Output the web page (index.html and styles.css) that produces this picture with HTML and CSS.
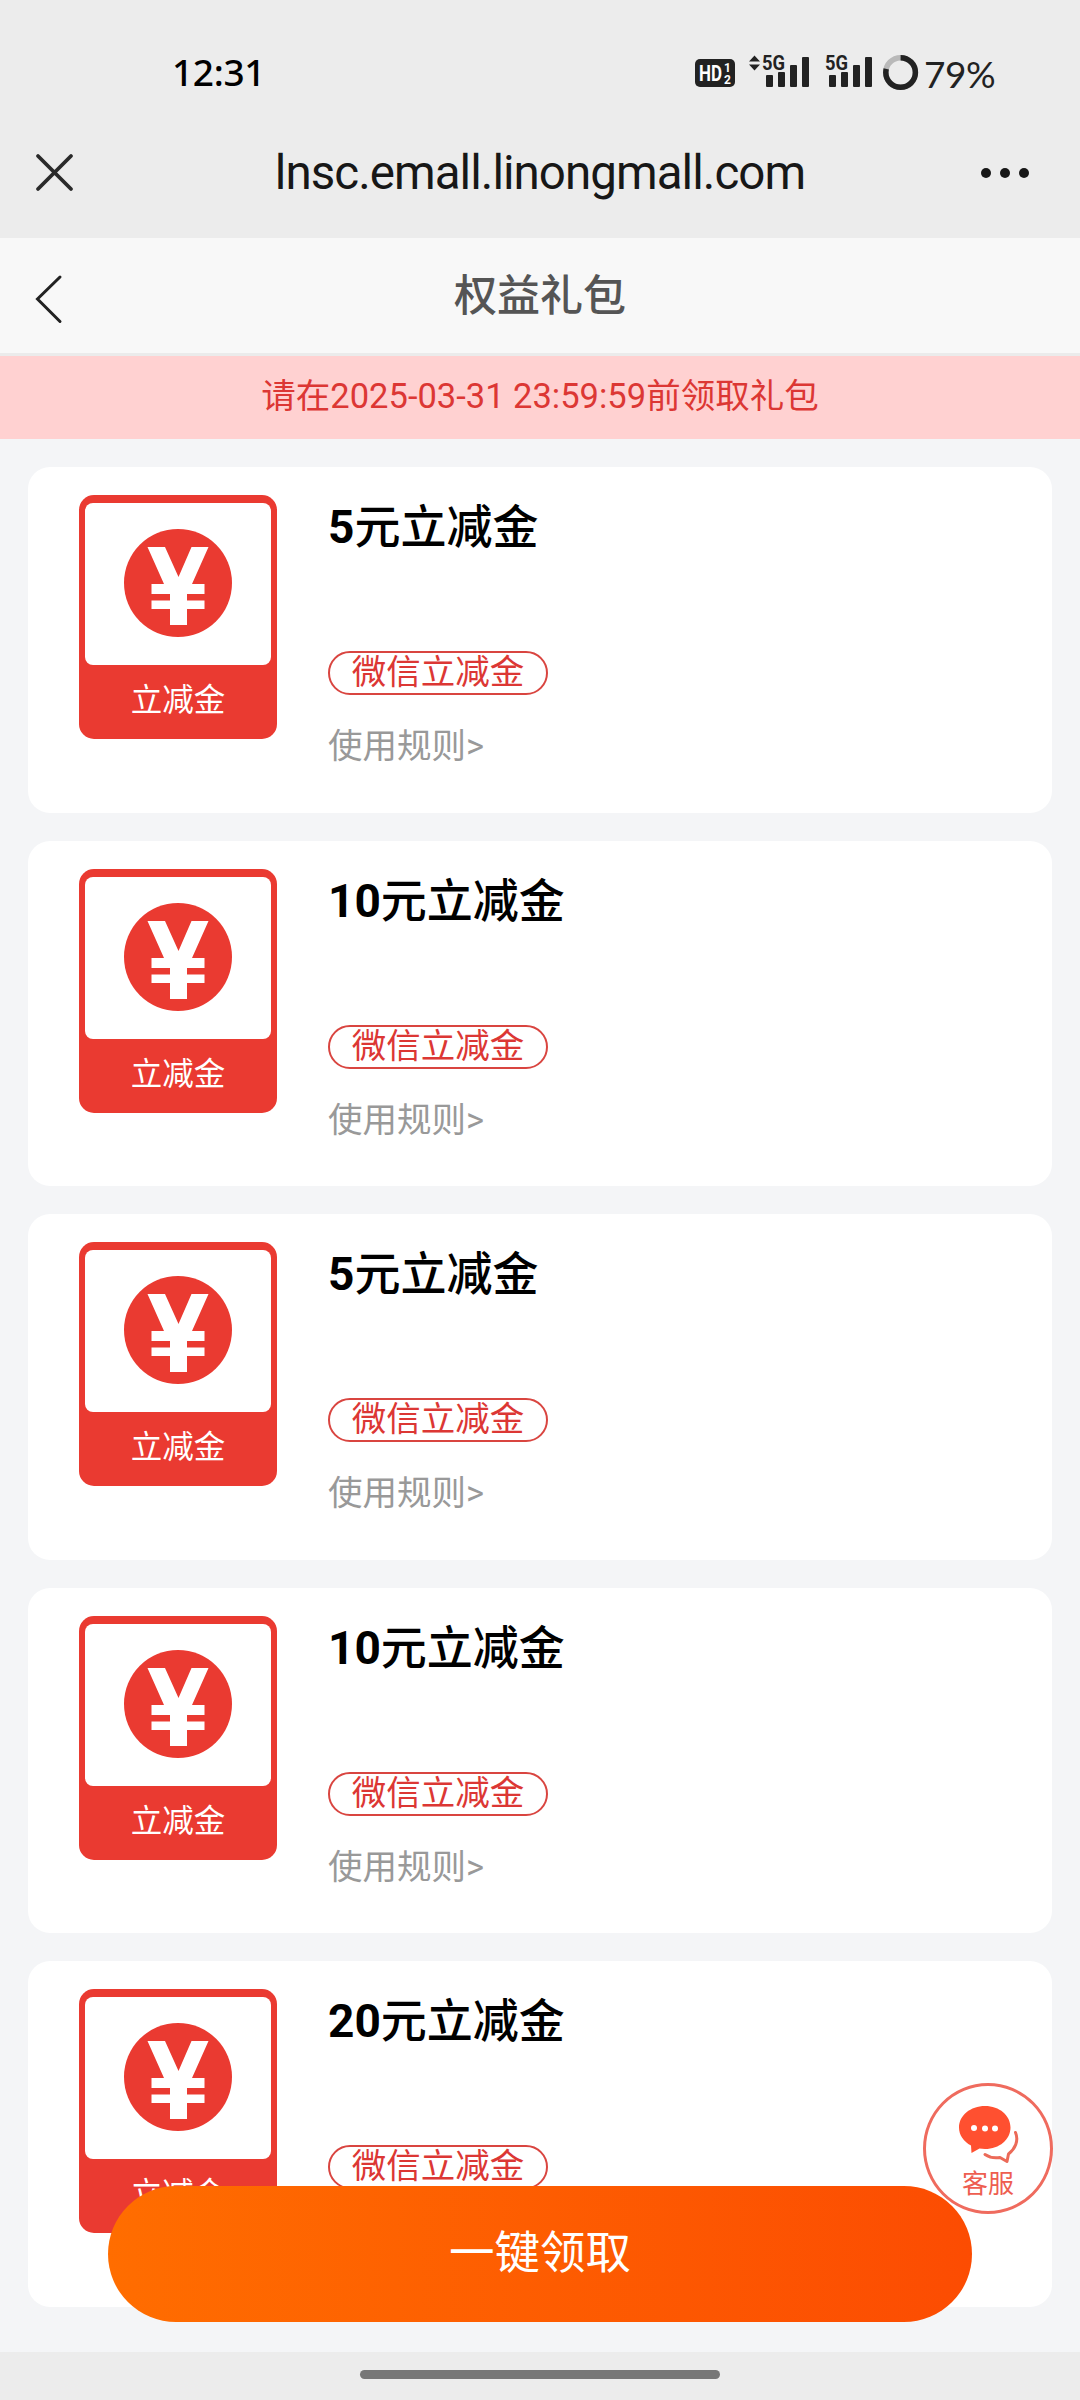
FILE: index.html
```html
<!DOCTYPE html>
<html lang="zh-CN">
<head>
<meta charset="utf-8">
<title>权益礼包</title>
<link rel="stylesheet" href="styles.css">
</head>
<body>
<div class="screen">
  <header class="status">
    <span class="clock">12:31</span>
    <div class="indicators">
      <svg class="signals" width="224" height="44" viewBox="0 0 224 44">
        <rect x="0" y="9" width="40" height="28" rx="5" fill="#222"/>
        <text class="hd" x="4" y="31" textLength="23" lengthAdjust="spacingAndGlyphs">HD</text>
        <text class="hd-num" x="29" y="22">1</text>
        <text class="hd-num" x="29" y="34">2</text>
        <g fill="#222">
          <path d="M54 11.500L59.500 5.500L65 11.500ZM54 14.500L59.500 20.500L65 14.500Z"/>
          <rect x="71" y="25" width="7" height="12" rx="1"/>
          <rect x="83" y="22" width="7" height="15" rx="1"/>
          <rect x="95" y="15" width="7" height="22" rx="1"/>
          <rect x="107" y="7" width="7" height="30" rx="1"/>
          <rect x="134" y="25" width="7" height="12" rx="1"/>
          <rect x="146" y="22" width="7" height="15" rx="1"/>
          <rect x="158" y="15" width="7" height="22" rx="1"/>
          <rect x="170" y="7" width="7" height="30" rx="1"/>
        </g>
        <text class="net" x="67" y="20" textLength="23" lengthAdjust="spacingAndGlyphs">5G</text>
        <text class="net" x="130" y="20" textLength="23" lengthAdjust="spacingAndGlyphs">5G</text>
        <circle cx="205.600" cy="22.500" r="14.800" fill="none" stroke="#b9b9b9" stroke-width="5.500"/>
        <circle cx="205.600" cy="22.500" r="14.800" fill="none" stroke="#222" stroke-width="5.500" pathLength="100" stroke-dasharray="79 21" transform="rotate(-90 205.600 22.500)"/>
      </svg>
      <span class="battery">79%</span>
    </div>
  </header>
  <div class="webbar">
    <svg width="41" height="41" viewBox="0 0 41 41"><path d="M4 4L37 37M37 4L4 37" stroke="#2a2a2a" stroke-width="3.800" stroke-linecap="round"/></svg>
    <span class="url">lnsc.emall.linongmall.com</span>
    <svg width="50" height="12" viewBox="0 0 50 12" fill="#171717"><circle cx="6" cy="6" r="5"/><circle cx="25" cy="6" r="5"/><circle cx="44" cy="6" r="5"/></svg>
  </div>
  <nav class="nav">
    <svg width="30" height="50" viewBox="0 0 30 50"><path d="M26 3L3.500 25L26 47.500" fill="none" stroke="#222" stroke-width="3" stroke-linecap="round"/></svg>
    <h1 class="nav-title">权益礼包</h1>
  </nav>
  <div class="notice">请在2025-03-31 23:59:59前领取礼包</div>
  <main class="list">
    <article class="card">
      <div class="coupon"><div class="coupon-face"><svg width="110" height="110" viewBox="0 0 110 110"><use href="#yen"/></svg></div><span class="coupon-name">立减金</span></div>
      <div class="info"><h2 class="title"><b>5</b>元立减金</h2><span class="tag">微信立减金</span><a class="rules">使用规则&gt;</a></div>
    </article>
    <article class="card">
      <div class="coupon"><div class="coupon-face"><svg width="110" height="110" viewBox="0 0 110 110"><use href="#yen"/></svg></div><span class="coupon-name">立减金</span></div>
      <div class="info"><h2 class="title"><b>10</b>元立减金</h2><span class="tag">微信立减金</span><a class="rules">使用规则&gt;</a></div>
    </article>
    <article class="card">
      <div class="coupon"><div class="coupon-face"><svg width="110" height="110" viewBox="0 0 110 110"><use href="#yen"/></svg></div><span class="coupon-name">立减金</span></div>
      <div class="info"><h2 class="title"><b>5</b>元立减金</h2><span class="tag">微信立减金</span><a class="rules">使用规则&gt;</a></div>
    </article>
    <article class="card">
      <div class="coupon"><div class="coupon-face"><svg width="110" height="110" viewBox="0 0 110 110"><use href="#yen"/></svg></div><span class="coupon-name">立减金</span></div>
      <div class="info"><h2 class="title"><b>10</b>元立减金</h2><span class="tag">微信立减金</span><a class="rules">使用规则&gt;</a></div>
    </article>
    <article class="card">
      <div class="coupon"><div class="coupon-face"><svg width="110" height="110" viewBox="0 0 110 110"><use href="#yen"/></svg></div><span class="coupon-name">立减金</span></div>
      <div class="info"><h2 class="title"><b>20</b>元立减金</h2><span class="tag">微信立减金</span></div>
    </article>
  </main>
  <footer class="system"><div class="home"></div></footer>
  <button class="claim">一键领取</button>
  <div class="service">
    <svg width="62" height="58" viewBox="0 0 62 58">
      <path d="M28 1C13.500 1 2 10.500 2 22.500C2 30 6.500 36.500 14 40.500L14.500 48L22.500 43.500C24.500 43.800 26 44 28 44C42.500 44 53.500 34.500 53.500 22.500S42.500 1 28 1Z" fill="#ff5030"/>
      <circle cx="17" cy="23" r="3" fill="#fff"/><circle cx="28" cy="23.500" r="3" fill="#fff"/><circle cx="38" cy="23.500" r="3" fill="#fff"/>
      <path d="M58.500 27.500C62 36 58 44 51.500 49L50 56.500L43 52.500C37 53.500 32.500 52.500 28 49.500" fill="none" stroke="#ec6a58" stroke-width="3" stroke-linecap="round" stroke-linejoin="round"/>
    </svg>
    <span>客服</span>
  </div>
</div>
<svg class="defs" width="0" height="0"><defs><g id="yen">
  <circle cx="55" cy="55" r="54" fill="#ea3a31"/>
  <path d="M24.500 19H42L55.500 49L68.500 19H85.500L69 56H81.500V66H64V72.500H81.500V81H64V97H47V81H28.500V72.500H47V66H28.500V56H41Z" fill="#fff"/>
</g></defs></svg>
</body>
</html>
```
FILE: styles.css
```css
* { box-sizing: border-box; margin: 0; padding: 0; }
body {
  width: 1080px;
  height: 2400px;
  overflow: hidden;
  font-family: Roboto, "Noto Sans CJK SC", sans-serif;
}
.screen {
  position: relative;
  width: 1080px;
  height: 2400px;
  display: flex;
  flex-direction: column;
  background: #f4f5f7;
}
.status {
  height: 146px;
  padding: 0 84px 0 172px;
  display: flex;
  justify-content: space-between;
  background: #ececec;
}
.clock {
  padding-top: 51px;
  font: 500 37px/42px "Noto Sans", sans-serif;
  letter-spacing: -0.3px;
  color: #000;
}
.indicators { display: flex; padding-top: 50px; }
.signals { flex: none; }
.battery {
  width: 77px;
  padding-left: 5px;
  font: 400 37px/48px Lato, sans-serif;
  letter-spacing: -0.5px;
  color: #222;
}
.hd { font: 700 22px Roboto, sans-serif; fill: #fff; }
.hd-num { font: 700 12px Roboto, sans-serif; fill: #fff; }
.net { font: 700 20px Roboto, sans-serif; fill: #222; }
.webbar {
  height: 92px;
  padding: 0 50px 39px 34px;
  display: grid;
  grid-template-columns: 50px 1fr 50px;
  grid-template-rows: 53px;
  align-items: center;
  background: #ececec;
}
.url {
  padding: 2px 0 0 16px;
  font-size: 47.500px;
  line-height: 53px;
  letter-spacing: -0.950px;
  text-align: center;
  color: #171717;
}
.nav {
  height: 118px;
  padding: 0 34px;
  display: grid;
  grid-template-columns: 30px 1fr 30px;
  align-items: center;
  background: #f8f8f8;
  border-bottom: 3px solid #ebebeb;
}
.nav svg { margin-top: 7px; }
.nav-title {
  font-size: 43px;
  font-weight: 500;
  line-height: 60px;
  text-align: center;
  color: #555;
}
.notice {
  height: 83px;
  line-height: 81px;
  font-size: 34.500px;
  text-align: center;
  color: #dc3734;
  background: #ffd1d1;
}
.list {
  flex: 1;
  min-height: 0;
  padding: 28px 28px 0;
  display: flex;
  flex-direction: column;
  gap: 28px;
}
.card {
  flex: none;
  height: 345.500px;
  padding: 28px 51px;
  display: flex;
  gap: 51px;
  border-radius: 22px;
  background: #fff;
}
.coupon {
  width: 198px;
  height: 244px;
  padding: 8px 6px 0;
  display: flex;
  flex-direction: column;
  border-radius: 15px;
  background: #ea3a31;
}
.coupon-face {
  height: 162px;
  display: flex;
  justify-content: center;
  padding-top: 25px;
  border-radius: 8px;
  background: #fff;
}
.coupon-name {
  padding-top: 3px;
  line-height: 66px;
  font-size: 31.500px;
  text-align: center;
  color: #fff;
}
.info {
  display: flex;
  flex-direction: column;
  align-items: flex-start;
}
.title {
  height: 156px;
  padding-top: 1px;
  font-size: 46px;
  font-weight: 500;
  line-height: 63px;
  color: #000;
}
.title b { font-weight: 700; }
.tag {
  width: 220px;
  height: 44px;
  border: 2px solid #d94540;
  border-radius: 22px;
  line-height: 39px;
  font-size: 34.500px;
  text-align: center;
  color: #dc3734;
}
.rules {
  margin-top: 26px;
  line-height: 50px;
  font-size: 34.500px;
  color: #999;
}
.system {
  height: 48px;
  padding-top: 18px;
  background: #ececec;
}
.home {
  width: 360px;
  height: 9px;
  margin: 0 auto;
  border-radius: 5px;
  background: #777;
}
.claim {
  position: absolute;
  left: 108px;
  top: 2186px;
  width: 864px;
  height: 136px;
  border: 0;
  border-radius: 68px;
  font: 400 45.500px/136px Roboto, "Noto Sans CJK SC", sans-serif;
  color: #fff;
  background: linear-gradient(90deg, #ff6d00, #fc4c02);
}
.service {
  position: absolute;
  left: 923px;
  top: 2083px;
  width: 130px;
  height: 131px;
  padding-top: 19px;
  display: flex;
  flex-direction: column;
  align-items: center;
  border: 3px solid #ef6b5e;
  border-radius: 50%;
  font-size: 26px;
  line-height: 38px;
  color: #ee5e50;
  background: #fff;
}
.service svg { flex: none; margin-bottom: 2px; }
.defs { position: absolute; }
```
